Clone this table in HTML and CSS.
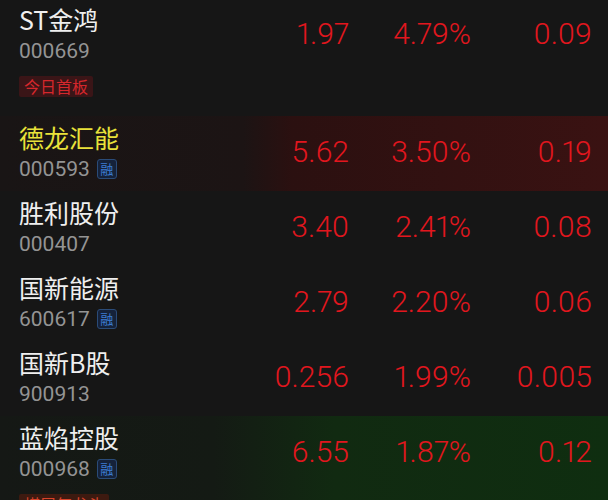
FILE: index.html
```html
<!DOCTYPE html>
<html lang="zh-CN">
<head>
<meta charset="utf-8">
<link rel="stylesheet" href="styles.css">
</head>
<body>
<div class="list">
  <div class="row">
    <div class="main">
      <div class="stock">
        <div class="name">ST金鸿</div>
        <div class="code">000669</div>
      </div>
      <div class="val">1.97</div>
      <div class="val">4.79%</div>
      <div class="val">0.09</div>
    </div>
    <div class="tag">今日首板</div>
  </div>
  <div class="row row-red">
    <div class="main">
      <div class="stock">
        <div class="name name-yellow">德龙汇能</div>
        <div class="code">000593<span class="rong">融</span></div>
      </div>
      <div class="val">5.62</div>
      <div class="val">3.50%</div>
      <div class="val">0.19</div>
    </div>
  </div>
  <div class="row">
    <div class="main">
      <div class="stock">
        <div class="name">胜利股份</div>
        <div class="code">000407</div>
      </div>
      <div class="val">3.40</div>
      <div class="val">2.41%</div>
      <div class="val">0.08</div>
    </div>
  </div>
  <div class="row">
    <div class="main">
      <div class="stock">
        <div class="name">国新能源</div>
        <div class="code">600617<span class="rong">融</span></div>
      </div>
      <div class="val">2.79</div>
      <div class="val">2.20%</div>
      <div class="val">0.06</div>
    </div>
  </div>
  <div class="row">
    <div class="main">
      <div class="stock">
        <div class="name">国新B股</div>
        <div class="code">900913</div>
      </div>
      <div class="val">0.256</div>
      <div class="val">1.99%</div>
      <div class="val">0.005</div>
    </div>
  </div>
  <div class="row row-green">
    <div class="main">
      <div class="stock">
        <div class="name">蓝焰控股</div>
        <div class="code">000968<span class="rong">融</span></div>
      </div>
      <div class="val">6.55</div>
      <div class="val">1.87%</div>
      <div class="val">0.12</div>
    </div>
    <div class="tag tag-orange">煤层气龙头</div>
  </div>
</div>
</body>
</html>
```

FILE: styles.css
```css
html, body {
  margin: 0;
  padding: 0;
  background: #161616;
  overflow: hidden;
}

body {
  width: 608px;
  height: 500px;
  font-family: Roboto, "Noto Sans CJK SC", sans-serif;
}

.list {
  margin-top: -2px;
  display: flex;
  flex-direction: column;
}

.row {
  display: flex;
  flex-direction: column;
  align-items: flex-start;
  padding: 6px 16px 10px 19px;
}

.row-red {
  background: linear-gradient(to right, #191515 0%, #1c1414 40%, #2b1010 48%, #3a1212 100%);
}

.row-green {
  background: linear-gradient(to right, #151815 0%, #141a14 35%, #112a11 55%, #0f2e10 100%);
}

.main {
  align-self: stretch;
  display: grid;
  grid-template-columns: 1fr 110px 122px 121px;
  align-items: center;
}

.stock {
  display: flex;
  flex-direction: column;
}

.name {
  font-family: "Noto Sans CJK SC", sans-serif;
  font-size: 25px;
  line-height: 30px;
  color: #efefef;
}

.name-yellow {
  color: #e9e23a;
}

.code {
  margin-top: 5px;
  font-family: Roboto, sans-serif;
  font-size: 21px;
  line-height: 24px;
  color: #949494;
  display: flex;
  align-items: center;
}

.rong {
  margin-left: 7px;
  width: 20px;
  height: 20px;
  box-sizing: border-box;
  border: 1px solid #2a4b78;
  border-radius: 3px;
  background: #15223a;
  color: #3d7ed4;
  font-family: "Noto Sans CJK SC", sans-serif;
  font-size: 13px;
  line-height: 18px;
  text-align: center;
}

.val {
  text-align: right;
  font-family: Roboto, sans-serif;
  font-weight: 300;
  font-variant-numeric: proportional-nums;
  font-size: 30px;
  line-height: 36px;
  color: #e2161e;
}

.tag {
  margin-top: 13px;
  margin-bottom: 9px;
  height: 21px;
  line-height: 21px;
  padding: 0 5px;
  border-radius: 2px;
  background: #3a1517;
  color: #d5272c;
  font-family: "Noto Sans CJK SC", sans-serif;
  font-size: 16px;
}

.tag-orange {
  background: #3d1a10;
  color: #d9432a;
}
```
